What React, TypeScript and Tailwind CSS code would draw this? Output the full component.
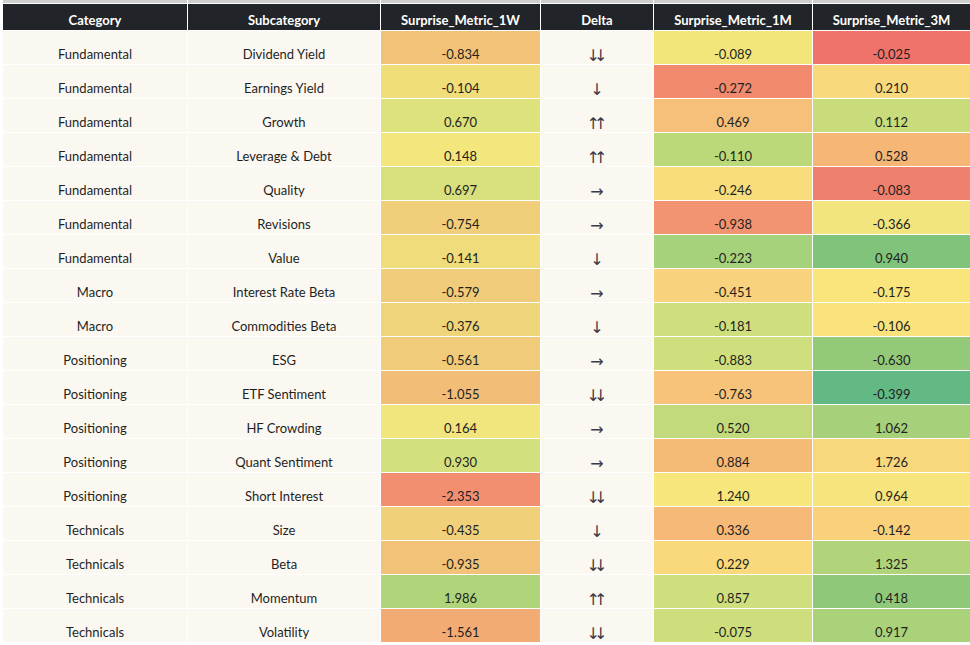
import React from 'react'

type Row = {
  category: string
  sub: string
  w1: [string, string]
  delta: string
  m1: [string, string]
  m3: [string, string]
}

const rows: Row[] = [
  { category: 'Fundamental', sub: 'Dividend Yield', w1: ['-0.834', '#f1c277'], delta: '↓↓', m1: ['-0.089', '#f2e67a'], m3: ['-0.025', '#ef736b'] },
  { category: 'Fundamental', sub: 'Earnings Yield', w1: ['-0.104', '#efde7a'], delta: '↓', m1: ['-0.272', '#f18a6e'], m3: ['0.210', '#fad87c'] },
  { category: 'Fundamental', sub: 'Growth', w1: ['0.670', '#dde27c'], delta: '↑↑', m1: ['0.469', '#f6c07a'], m3: ['0.112', '#c8dc7c'] },
  { category: 'Fundamental', sub: 'Leverage & Debt', w1: ['0.148', '#f2e67c'], delta: '↑↑', m1: ['-0.110', '#bcd97a'], m3: ['0.528', '#f6b676'] },
  { category: 'Fundamental', sub: 'Quality', w1: ['0.697', '#d7e07c'], delta: '→', m1: ['-0.246', '#f9dd7c'], m3: ['-0.083', '#f0806e'] },
  { category: 'Fundamental', sub: 'Revisions', w1: ['-0.754', '#f0ce7a'], delta: '→', m1: ['-0.938', '#f29471'], m3: ['-0.366', '#f2e47e'] },
  { category: 'Fundamental', sub: 'Value', w1: ['-0.141', '#f0dc7a'], delta: '↓', m1: ['-0.223', '#a7d27c'], m3: ['0.940', '#80c37a'] },
  { category: 'Macro', sub: 'Interest Rate Beta', w1: ['-0.579', '#f0cb7a'], delta: '→', m1: ['-0.451', '#f8d27c'], m3: ['-0.175', '#fae47c'] },
  { category: 'Macro', sub: 'Commodities Beta', w1: ['-0.376', '#efd57a'], delta: '↓', m1: ['-0.181', '#cfdf7e'], m3: ['-0.106', '#fae27c'] },
  { category: 'Positioning', sub: 'ESG', w1: ['-0.561', '#f0cc7a'], delta: '→', m1: ['-0.883', '#d0df7e'], m3: ['-0.630', '#93c979'] },
  { category: 'Positioning', sub: 'ETF Sentiment', w1: ['-1.055', '#f1bd77'], delta: '↓↓', m1: ['-0.763', '#f7c379'], m3: ['-0.399', '#62b984'] },
  { category: 'Positioning', sub: 'HF Crowding', w1: ['0.164', '#f1e67d'], delta: '→', m1: ['0.520', '#c3da7c'], m3: ['1.062', '#a6d07a'] },
  { category: 'Positioning', sub: 'Quant Sentiment', w1: ['0.930', '#d4e07e'], delta: '→', m1: ['0.884', '#f6ba77'], m3: ['1.726', '#f9d77c'] },
  { category: 'Positioning', sub: 'Short Interest', w1: ['-2.353', '#f28f70'], delta: '↓↓', m1: ['1.240', '#f6e67c'], m3: ['0.964', '#f8e47c'] },
  { category: 'Technicals', sub: 'Size', w1: ['-0.435', '#f1d07a'], delta: '↓', m1: ['0.336', '#f6b977'], m3: ['-0.142', '#f8d17a'] },
  { category: 'Technicals', sub: 'Beta', w1: ['-0.935', '#f1c277'], delta: '↓↓', m1: ['0.229', '#f9d97c'], m3: ['1.325', '#b1d47b'] },
  { category: 'Technicals', sub: 'Momentum', w1: ['1.986', '#b0d47a'], delta: '↑↑', m1: ['0.857', '#d0df7e'], m3: ['0.418', '#8fc879'] },
  { category: 'Technicals', sub: 'Volatility', w1: ['-1.561', '#f3ab74'], delta: '↓↓', m1: ['-0.075', '#cede7c'], m3: ['0.917', '#a9d27a'] },
]

const headers = ['Category', 'Subcategory', 'Surprise_Metric_1W', 'Delta', 'Surprise_Metric_1M', 'Surprise_Metric_3M']

function Cell({ children, bg }: { children: React.ReactNode; bg?: string }) {
  return (
    <div
      className="h-[33px] flex justify-center pt-[15px] leading-4 text-[13px] text-[#1f1f1f] bg-[#fbf8f1]"
      style={bg ? { backgroundColor: bg } : undefined}
    >
      {children}
    </div>
  )
}

export default function App() {
  return (
    <div className="w-[970px] h-[645px] bg-white pl-[3px] overflow-hidden" style={{ fontFamily: 'Lato, "DejaVu Sans", sans-serif' }}>
      <div className="grid grid-cols-[184px_192px_159px_112px_158px_157px] gap-px bg-white">
        {headers.map((h) => (
          <div key={'s' + h} className="h-[3px] bg-[#cfcfcf]" />
        ))}
        {headers.map((h) => (
          <div key={h} className="h-[26px] flex justify-center pt-[8px] leading-4 text-[13px] font-bold text-white bg-[#212428]">
            {h}
          </div>
        ))}
        {rows.map((r) => (
          <React.Fragment key={r.sub}>
            <Cell>{r.category}</Cell>
            <Cell>{r.sub}</Cell>
            <Cell bg={r.w1[1]}>{r.w1[0]}</Cell>
            <Cell>
              <span className="mt-[2px] font-['DejaVu_Sans'] text-[16px] tracking-[-6px] pr-[6px] text-[#3a3a4a]">{r.delta}</span>
            </Cell>
            <Cell bg={r.m1[1]}>{r.m1[0]}</Cell>
            <Cell bg={r.m3[1]}>{r.m3[0]}</Cell>
          </React.Fragment>
        ))}
      </div>
    </div>
  )
}
